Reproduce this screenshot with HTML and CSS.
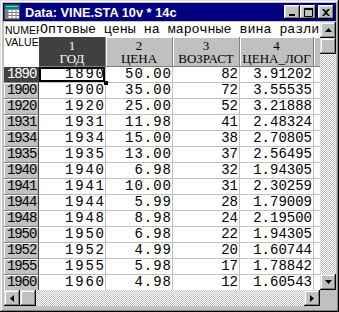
FILE: index.html
```html
<!DOCTYPE html>
<html>
<head>
<meta charset="utf-8">
<link rel="stylesheet" href="styles.css">
</head>
<body>
<div class="window">
  <div class="titlebar">
    <svg class="app-icon" width="16" height="16" viewBox="0 0 16 16">
      <rect x="0" y="0" width="16" height="16" fill="#c0c0c0"/>
      <rect x="1" y="1" width="14" height="4" fill="#008080"/>
      <rect x="2" y="2" width="12" height="1" fill="#00ffff"/>
      <rect x="1" y="5" width="14" height="10" fill="#fff"/>
      <path d="M1 5h14M1 8h14M1 11h14M1 14h14M4 5v10M8 5v10M12 5v10" stroke="#808080" stroke-width="1" fill="none" transform="translate(0 0.5)"/>
      <rect x="1" y="5" width="3" height="10" fill="#808080"/>
      <rect x="0.5" y="0.5" width="15" height="15" fill="none" stroke="#404040"/>
    </svg>
    <span class="title">Data: VINE.STA 10v * 14c</span>
    <div class="tbtns">
      <div class="tb"><svg width="8" height="9" viewBox="0 0 8 9"><rect x="1" y="6" width="6" height="2" fill="#000"/></svg></div>
      <div class="tb"><svg width="9" height="9" viewBox="0 0 9 9"><path d="M0.5 0.5h8v8h-8z" fill="none" stroke="#000"/><rect x="0" y="0" width="9" height="2" fill="#000"/></svg></div>
      <div class="tb close"><svg width="8" height="7" viewBox="0 0 8 7"><path d="M0 0h2l2 2 2-2h2L5 3.5 8 7H6L4 5 2 7H0l3-3.5z" fill="#000"/></svg></div>
    </div>
  </div>
  <div class="client">
    <div class="sheet">
      <div class="corner">NUMERIC<br>VALUES</div>
      <div class="sheet-title">Оптовые цены на марочные вина различных лет</div>
      <div class="hd sel">1<br>ГОД</div>
      <div class="hd">2<br>ЦЕНА</div>
      <div class="hd">3<br>ВОЗРАСТ</div>
      <div class="hd">4<br>ЦЕНА_ЛОГ</div>
      <div class="hd extra"></div>

      <div class="rl sel">1890</div><div class="c k1 focus">1890</div><div class="c k2">50.00</div><div class="c k3">82</div><div class="c k4">3.91202</div><div class="c x"></div>
      <div class="rl">1900</div><div class="c k1">1900</div><div class="c k2">35.00</div><div class="c k3">72</div><div class="c k4">3.55535</div><div class="c x"></div>
      <div class="rl">1920</div><div class="c k1">1920</div><div class="c k2">25.00</div><div class="c k3">52</div><div class="c k4">3.21888</div><div class="c x"></div>
      <div class="rl">1931</div><div class="c k1">1931</div><div class="c k2">11.98</div><div class="c k3">41</div><div class="c k4">2.48324</div><div class="c x"></div>
      <div class="rl">1934</div><div class="c k1">1934</div><div class="c k2">15.00</div><div class="c k3">38</div><div class="c k4">2.70805</div><div class="c x"></div>
      <div class="rl">1935</div><div class="c k1">1935</div><div class="c k2">13.00</div><div class="c k3">37</div><div class="c k4">2.56495</div><div class="c x"></div>
      <div class="rl">1940</div><div class="c k1">1940</div><div class="c k2">6.98</div><div class="c k3">32</div><div class="c k4">1.94305</div><div class="c x"></div>
      <div class="rl">1941</div><div class="c k1">1941</div><div class="c k2">10.00</div><div class="c k3">31</div><div class="c k4">2.30259</div><div class="c x"></div>
      <div class="rl">1944</div><div class="c k1">1944</div><div class="c k2">5.99</div><div class="c k3">28</div><div class="c k4">1.79009</div><div class="c x"></div>
      <div class="rl">1948</div><div class="c k1">1948</div><div class="c k2">8.98</div><div class="c k3">24</div><div class="c k4">2.19500</div><div class="c x"></div>
      <div class="rl">1950</div><div class="c k1">1950</div><div class="c k2">6.98</div><div class="c k3">22</div><div class="c k4">1.94305</div><div class="c x"></div>
      <div class="rl">1952</div><div class="c k1">1952</div><div class="c k2">4.99</div><div class="c k3">20</div><div class="c k4">1.60744</div><div class="c x"></div>
      <div class="rl">1955</div><div class="c k1">1955</div><div class="c k2">5.98</div><div class="c k3">17</div><div class="c k4">1.78842</div><div class="c x"></div>
      <div class="rl">1960</div><div class="c k1">1960</div><div class="c k2">4.98</div><div class="c k3">12</div><div class="c k4">1.60543</div><div class="c x"></div>
    </div>
    <div class="vscroll">
      <div class="sbtn"><svg width="7" height="4" viewBox="0 0 7 4"><path d="M3.5 0L7 4H0z" fill="#000"/></svg></div>
      <div class="sbtn"></div>
      <div class="track"></div>
      <div class="sbtn"><svg width="7" height="4" viewBox="0 0 7 4"><path d="M0 0h7L3.5 4z" fill="#000"/></svg></div>
    </div>
    <div class="hscroll">
      <div class="sbtn"><svg width="4" height="7" viewBox="0 0 4 7"><path d="M0 3.5L4 0v7z" fill="#000"/></svg></div>
      <div class="sbtn"></div>
      <div class="track"></div>
      <div class="sbtn"><svg width="4" height="7" viewBox="0 0 4 7"><path d="M0 0l4 3.5L0 7z" fill="#000"/></svg></div>
    </div>
    <div class="corner-box"></div>
  </div>
</div>
</body>
</html>
```

FILE: styles.css
```css
* { box-sizing: border-box; }
body { margin: 0; background: #c0c0c0; }

.window {
  width: 339px;
  height: 312px;
  padding: 3px;
  background: #c0c0c0;
  box-shadow: inset -1px -1px #000, inset 1px 1px #dfdfdf, inset -2px -2px #808080, inset 2px 2px #fff;
  display: flex;
  flex-direction: column;
  gap: 1px;
}

.titlebar {
  height: 18px;
  flex: none;
  background: #000080;
  color: #fff;
  display: flex;
  align-items: center;
  padding: 0 2px 0 1px;
}
.app-icon { flex: none; display: block; }
.title {
  flex: 1;
  margin-left: 5px;
  font: bold 12.8px "Liberation Sans", sans-serif;
  white-space: nowrap;
}
.tbtns { display: flex; }
.tb {
  width: 16px;
  height: 14px;
  background: #c0c0c0;
  box-shadow: inset -1px -1px #000, inset 1px 1px #fff, inset -2px -2px #808080, inset 2px 2px #dfdfdf;
  display: flex;
  align-items: center;
  justify-content: center;
}
.tb svg { display: block; }
.tb.close { margin-left: 2px; }

.client {
  height: 284px;
  flex: none;
  margin-left: 1px;
  display: grid;
  grid-template-columns: 316px 16px;
  grid-template-rows: 268px 16px;
}

.sheet {
  overflow: hidden;
  min-height: 0;
  background: #fff;
  display: grid;
  grid-template-columns: 35px 67px 67px 67px 74px 40px;
  grid-template-rows: 15px 30px repeat(14, 16px);
}

.corner {
  grid-row: 1 / 3;
  background: #fff;
  font: 10.5px/12px "Liberation Sans", sans-serif;
  color: #000;
  padding: 2px 0 0 1px;
  overflow: hidden;
  white-space: nowrap;
}
.sheet-title {
  grid-column: 2 / -1;
  font: 13.3px/15px "Liberation Mono", monospace;
  white-space: nowrap;
  overflow: hidden;
  padding-left: 1px;
  color: #000;
}

.hd {
  background: #c0c0c0;
  color: #000;
  font: 13px/13px "Liberation Serif", serif;
  text-align: center;
  padding-top: 2px;
  border-right: 1px solid #808080;
  border-bottom: 1px solid #808080;
  box-shadow: inset 1px 1px #fff;
}
.hd.sel { background: #404040; color: #fff; box-shadow: none; }

.rl {
  background: #c0c0c0;
  color: #000;
  font: 14px/15px "Liberation Mono", monospace;
  letter-spacing: -1.1px;
  padding-left: 3px;
  border-right: 1px solid #404040;
  border-bottom: 1px solid #808080;
  box-shadow: inset 1px 1px #fff;
}
.rl.sel { background: #404040; color: #fff; box-shadow: none; }

.c {
  font: 14px/15px "Liberation Mono", monospace;
  color: #000;
  text-align: right;
  padding-right: 1px;
  border-right: 1px solid #c0c0c0;
  border-bottom: 1px solid #c0c0c0;
  white-space: nowrap;
}
.c::after { content: ""; }
.k1 { letter-spacing: 1.8px; }
.k1::after { margin-right: -1.8px; }
.k2 { letter-spacing: 1px; }
.k2::after { margin-right: -1px; }
.k3 { letter-spacing: 0; }
.k4 { letter-spacing: 0; }

.c.focus { position: relative; box-shadow: inset 0 0 0 2px #000; }
.c.focus::before {
  content: "";
  position: absolute;
  right: -3px;
  bottom: -3px;
  width: 4px;
  height: 4px;
  background: #000;
}

.sbtn {
  width: 16px;
  height: 16px;
  flex: none;
  background: #c0c0c0;
  box-shadow: inset -1px -1px #000, inset 1px 1px #dfdfdf, inset -2px -2px #808080, inset 2px 2px #fff;
  display: flex;
  align-items: center;
  justify-content: center;
}
.sbtn svg { display: block; }
.track { flex: 1; }

.vscroll, .hscroll {
  display: flex;
  background: repeating-conic-gradient(#c0c0c0 0% 25%, #fff 0% 50%) 0 0 / 2px 2px;
}
.vscroll { flex-direction: column; }
.corner-box { background: #c0c0c0; }
```
